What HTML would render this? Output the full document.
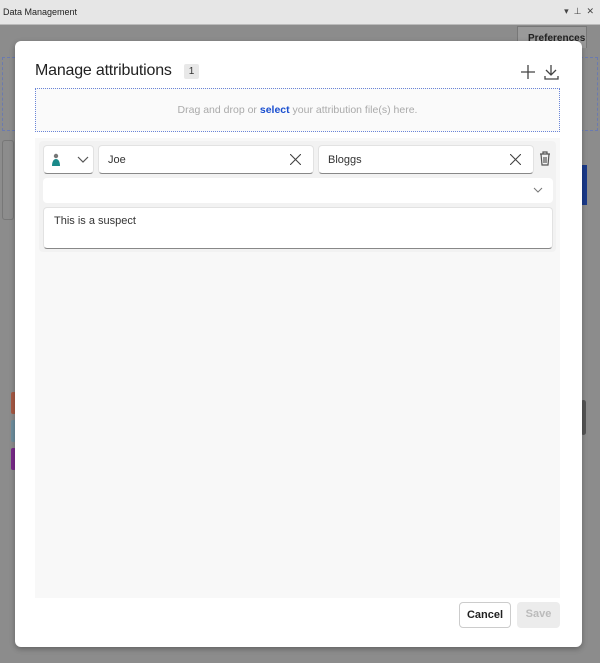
<!DOCTYPE html>
<html><head><meta charset="utf-8"><style>
*{box-sizing:border-box;margin:0;padding:0}
body{width:600px;height:663px;overflow:hidden;background:#8c8c8c;font-family:"Liberation Sans",sans-serif;position:relative}
.abs{position:absolute}
.title{left:0;top:0;width:600px;height:25px;background:#e6e6e6;font-size:9px;color:#222;padding:7px 3px;border-bottom:1px solid #bbb}
.modal{left:15px;top:41px;width:567px;height:606px;background:#fff;border-radius:6px;box-shadow:0 2px 6px rgba(0,0,0,.3)}
.inp{background:#fff;border-radius:4px;border:1px solid #e2e2e2;border-bottom:1px solid #888;font-size:11px;color:#333}
.btn{border-radius:4px;font-size:11px;font-weight:bold;text-align:center;line-height:24px}
</style></head><body>
<div class="abs title">Data Management<span style="position:absolute;right:6px;top:6px;font-size:9px;color:#444">▾ &nbsp;⊥ &nbsp;✕</span></div>
<div class="abs" style="left:517px;top:26px;width:70px;height:22px;background:#9a9a9a;border:1px solid #777;border-bottom:none;font-size:10px;font-weight:bold;color:#222;padding:6px 0 0 10px">Preferences</div>
<div class="abs" style="left:2px;top:57px;width:596px;height:74px;border:1px dashed #6a7ab0"></div>
<div class="abs" style="left:2px;top:140px;width:12px;height:80px;border:1px solid #777;border-radius:3px"></div>
<div class="abs" style="left:11px;top:392px;width:5px;height:22px;background:#a85a45;border-radius:2px"></div>
<div class="abs" style="left:11px;top:420px;width:5px;height:22px;background:#6f8f9f;border-radius:2px"></div>
<div class="abs" style="left:11px;top:448px;width:5px;height:22px;background:#7a2a8a;border-radius:2px"></div>
<div class="abs" style="left:581px;top:165px;width:6px;height:40px;background:#1a3a8a"></div>
<div class="abs" style="left:581px;top:400px;width:5px;height:35px;background:#555;border-radius:3px"></div>
<div class="abs modal"></div>
<div class="abs" style="left:35px;top:62px;font-size:16px;color:#222;letter-spacing:-0.2px">Manage attributions</div>
<div class="abs" style="left:184px;top:64px;width:15px;height:15px;background:#e8e8e8;border-radius:2px;font-size:10px;text-align:center;line-height:15px;color:#333">1</div>
<svg class="abs" style="left:521px;top:64px" width="40" height="16"><path d="M7 1v14M0 8h14" stroke="#444" stroke-width="1.3" fill="none"/><path d="M30 1v10M25 6l5 5 5-5M24 12v3h13v-3" stroke="#444" stroke-width="1.3" fill="none"/></svg>
<div class="abs" style="left:35px;top:88px;width:525px;height:44px;background:#fafafa;border:1px dotted #6a85d8;font-size:10.5px;color:#aaa;text-align:center;line-height:42px">Drag and drop or <b style="color:#1a4fd0">select</b> your attribution file(s) here.</div>
<div class="abs" style="left:35px;top:138px;width:525px;height:460px;background:#f8f8f8"></div>
<div class="abs" style="left:39px;top:141px;width:517px;height:111px;background:#f2f2f2;border-radius:4px"></div>
<div class="abs inp" style="left:43px;top:145px;width:51px;height:29px"><svg style="position:absolute;left:7px;top:7px" width="40" height="14"><circle cx="5" cy="3" r="2.2" fill="#777"/><path d="M1 13c0-5 2-7 4-7s4 2 4 7z" fill="#1a8a8a"/><path d="M27 4l5 5 5-5" stroke="#555" fill="none" stroke-width="1.2"/></svg></div>
<div class="abs inp" style="left:98px;top:145px;width:216px;height:29px;padding:8px 9px">Joe<svg style="position:absolute;right:12px;top:8px" width="11" height="11"><path d="M0 0l11 11M11 0L0 11" stroke="#444" stroke-width="1.1"/></svg></div>
<div class="abs inp" style="left:318px;top:145px;width:216px;height:29px;padding:8px 9px">Bloggs<svg style="position:absolute;right:12px;top:8px" width="11" height="11"><path d="M0 0l11 11M11 0L0 11" stroke="#444" stroke-width="1.1"/></svg></div>
<svg class="abs" style="left:539px;top:151px" width="12" height="15"><path d="M1 3h10M4 3V1h4v2M2 3l1 11h6l1-11M5 6v6M7 6v6" stroke="#555" fill="none" stroke-width="1.2"/></svg>
<div class="abs" style="left:43px;top:178px;width:510px;height:25px;background:#fff;border-radius:4px"><svg style="position:absolute;right:10px;top:9px" width="10" height="6"><path d="M1 1l4 4 4-4" stroke="#777" fill="none"/></svg></div>
<div class="abs inp" style="left:43px;top:207px;width:510px;height:42px;padding:7px 10px">This is a suspect</div>
<div class="abs btn" style="left:459px;top:602px;width:52px;height:26px;border:1px solid #ccc;color:#222">Cancel</div>
<div class="abs btn" style="left:517px;top:602px;width:43px;height:26px;background:#ececec;color:#bbb">Save</div>
</body></html>
